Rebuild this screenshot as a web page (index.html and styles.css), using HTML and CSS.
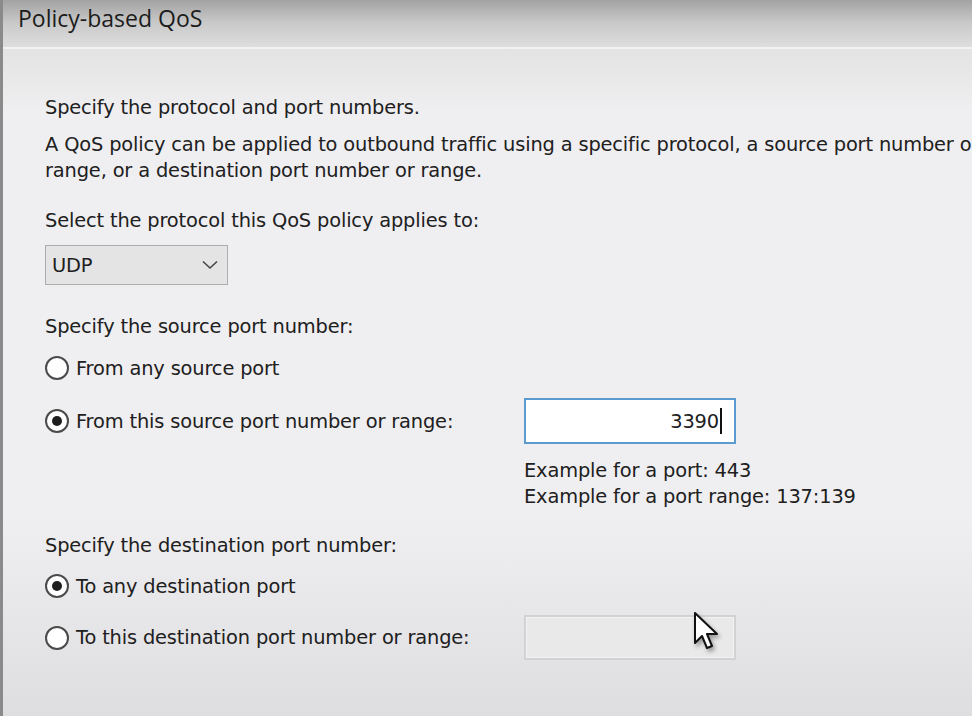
FILE: index.html
```html
<!DOCTYPE html>
<html>
<head>
<meta charset="utf-8">
<link rel="stylesheet" href="styles.css">
</head>
<body>
<div class="window">
  <header class="titlebar"><span class="title">Policy-based QoS</span></header>
  <main class="content">
    <p class="intro">Specify the protocol and port numbers.</p>
    <p class="desc">A QoS policy can be applied to outbound traffic using a specific protocol, a source port number or<br>range, or a destination port number or range.</p>

    <p class="label select-label">Select the protocol this QoS policy applies to:</p>
    <div class="dropdown">
      <span>UDP</span>
      <svg class="chev" width="16" height="10" viewBox="0 0 16 10"><path d="M1 1.5 L8 8 L15 1.5" fill="none" stroke="#444" stroke-width="1.6"/></svg>
    </div>

    <p class="label src-label">Specify the source port number:</p>
    <div class="row r1"><span class="radio"></span><span>From any source port</span></div>
    <div class="row r2">
      <div class="opt"><span class="radio checked"></span><span>From this source port number or range:</span></div>
      <div class="field active">3390<span class="caret"></span></div>
    </div>
    <div class="examples">
      <div>Example for a port: 443</div>
      <div>Example for a port range: 137:139</div>
    </div>

    <p class="label dst-label">Specify the destination port number:</p>
    <div class="row r3"><span class="radio checked"></span><span>To any destination port</span></div>
    <div class="row r4">
      <div class="opt"><span class="radio"></span><span>To this destination port number or range:</span></div>
      <div class="field disabled"></div>
    </div>
  </main>
  <svg class="cursor" width="30" height="44" viewBox="0 0 30 44">
    <path d="M2 2 L2 32 L9 25 L14 37 L19 35 L14 23 L24 23 Z" fill="#fff" stroke="#111" stroke-width="2" stroke-linejoin="round"/>
  </svg>
</div>
</body>
</html>
```
FILE: styles.css
```css
html, body {
  margin: 0;
  padding: 0;
  width: 972px;
  height: 716px;
  overflow: hidden;
}
body {
  font-family: "DejaVu Sans", sans-serif;
  font-size: 19.4px;
  letter-spacing: -0.15px;
  color: #202020;
}
.window {
  position: relative;
  width: 972px;
  height: 716px;
  border-left: 3px solid #8a8a8a;
  box-sizing: border-box;
  background: linear-gradient(to bottom, #e3e3e3 48px, #efeef0 110px, #efeef0 520px, #dedddf 716px);
  overflow: hidden;
}
.titlebar {
  height: 47px;
  border-bottom: 2px solid #f2f2f2;
  background: linear-gradient(to bottom, #a2a2a2 0px, #c8c8c8 22px, #dedede 47px);
  padding-left: 15px;
  box-sizing: content-box;
}
.title {
  display: block;
  font-family: "Open Sans", "Noto Sans", sans-serif;
  font-size: 23px;
  letter-spacing: 0;
  line-height: 30px;
  padding-top: 3px;
  color: #1c1c1c;
}
.content {
  padding: 46px 0 0 42px;
}
p { margin: 0; line-height: 26px; white-space: nowrap; }
.desc { margin-top: 11px; }
.select-label { margin-top: 24px; }
.dropdown {
  margin-top: 11px;
  height: 38px;
  border: 1px solid #adadad;
  background: #e4e4e4;
  display: flex;
  align-items: center;
  justify-content: space-between;
  padding: 0 9px 0 6px;
  box-sizing: content-box;
  width: 166px;
}
.src-label { margin-top: 29px; }
.row {
  display: flex;
  align-items: center;
  white-space: nowrap;
}
.row, .opt { gap: 7px; }
.opt { display: flex; align-items: center; width: 479px; }
.r1 { margin-top: 15px; height: 26px; }
.r2 { margin-top: 17px; gap: 0; }
.r3 { margin-top: 14px; height: 26px; }
.r4 { margin-top: 16px; gap: 0; }
.radio {
  width: 20px;
  height: 20px;
  border: 2px solid #4a4a4a;
  border-radius: 50%;
  background: #fff;
  flex: none;
  position: relative;
}
.radio.checked::after {
  content: "";
  position: absolute;
  left: 5px; top: 5px;
  width: 10px; height: 10px;
  border-radius: 50%;
  background: #1e1e1e;
}
.field {
  width: 208px;
  height: 42px;
  box-sizing: content-box;
  display: flex;
  align-items: center;
  justify-content: flex-end;
}
.field.active {
  border: 2px solid #5b9bd0;
  background: #fff;
}
.caret {
  display: inline-block;
  width: 2px;
  height: 26px;
  background: #111;
  margin: 0 12px 0 1px;
}
.field.disabled {
  border: 2px solid #d2d2d2;
  outline: 1px solid #f2f2f2;
  outline-offset: -3px;
  background: #e9e9ea;
  height: 41px;
}
.examples {
  margin: 14px 0 0 479px;
  line-height: 26px;
  white-space: nowrap;
}
.dst-label { margin-top: 23px; }
.cursor {
  position: absolute;
  left: 690px;
  top: 611px;
  filter: drop-shadow(2px 3px 2px rgba(0,0,0,0.35));
}
```
